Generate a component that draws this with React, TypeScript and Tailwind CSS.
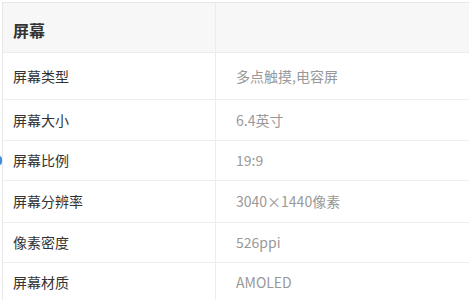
const rows = [
  { label: "屏幕类型", value: "多点触摸,电容屏", h: "h-[47px]" },
  { label: "屏幕大小", value: "6.4英寸", h: "h-[41px]" },
  { label: "屏幕比例", value: "19:9", h: "h-[40px]" },
  { label: "屏幕分辨率", value: "3040×1440像素", h: "h-[42px]" },
  { label: "像素密度", value: "526ppi", h: "h-[40px]" },
  { label: "屏幕材质", value: "AMOLED", h: "h-[40px]" },
];

export default function App() {
  return (
    <div
      className="relative w-[469px] h-[300px] overflow-hidden bg-white pt-[2px] pl-[2px]"
      style={{ fontFamily: '"Microsoft YaHei", "Noto Sans CJK SC", sans-serif' }}
    >
      {/* blue marker poking in from the left edge */}
      <div className="absolute left-[-4px] top-[156px] w-[6px] h-[9px] rounded-full bg-[#3b8fd6]" />

      <div className="border-t border-l border-[#e8e8e8]">
        <div className="flex h-[50px] bg-[#f7f7f7] border-b border-[#ececec]">
          <div className="w-[213px] border-r border-[#ececec] flex items-center pl-[10px] pt-[5px] text-[16px] font-bold text-[#333]">
            屏幕
          </div>
          <div className="flex-1" />
        </div>
        {rows.map((row) => (
          <div key={row.label} className={`flex ${row.h} border-b border-[#ededed]`}>
            <div className="w-[213px] border-r border-[#ececec] flex items-center pl-[10px] text-[14px] text-[#333]">
              {row.label}
            </div>
            <div className="flex-1 flex items-center pl-[20px] text-[14px] text-[#999]">
              {row.value}
            </div>
          </div>
        ))}
      </div>
    </div>
  );
}
